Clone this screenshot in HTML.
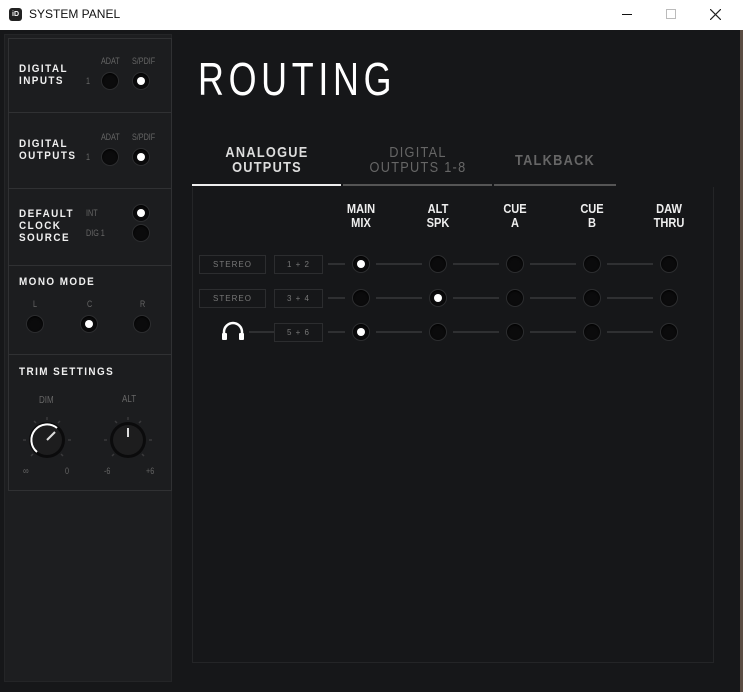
<!DOCTYPE html>
<html><head><meta charset="utf-8"><style>
*{margin:0;padding:0;box-sizing:border-box}
body{width:743px;height:692px;background:#161719;font-family:"Liberation Sans",sans-serif;position:relative;overflow:hidden;color:#fff}
.a{position:absolute}
.tb{left:0;top:0;width:743px;height:30px;background:#fff}
.sb{left:4px;top:34px;width:168px;height:648px;background:#1d1e20;border:1px solid #242527}
.sec{position:absolute;left:8px;width:164px;border:1px solid #303133;background:#1c1d1f}
.lbl{font-size:11px;font-weight:bold;letter-spacing:1.6px;line-height:12px;color:#f0f0f0;transform:scaleX(.9);transform-origin:left}
.sm{font-size:9px;color:#666;transform:scaleX(.8);transform-origin:left}
.r{position:absolute;width:18px;height:18px;margin:-9px 0 0 -9px;border-radius:50%;background:#0b0b0c;border:1px solid #2c2d2f;box-shadow:inset 0 1px 2px #000}
.r.on::after{content:"";position:absolute;left:4px;top:4px;width:8px;height:8px;border-radius:50%;background:#fff}
.ln{position:absolute;height:2px;background:#2f3032}
.hd{position:absolute;font-size:13px;font-weight:bold;text-align:center;line-height:14px;width:60px;margin-left:-30px;color:#eee;transform:scaleX(.85)}
.bx{position:absolute;border:1px solid #2c2d2f;height:19px;font-size:8px;color:#777;text-align:center;line-height:17px;letter-spacing:1px}
.tab{position:absolute;text-align:center;font-size:15px;letter-spacing:1.5px;line-height:15px;transform:scaleX(.85)}
</style></head><body>
<div class="a tb"></div>
<div class="a" style="left:9px;top:8px;width:13px;height:13px;background:#222;border-radius:3px;color:#fff;font-size:7px;font-weight:bold;text-align:center;line-height:13px">iD</div>
<div class="a" style="left:29px;top:7px;font-size:12px;color:#111">SYSTEM PANEL</div>
<div class="a" style="left:622px;top:14px;width:10px;height:1px;background:#111"></div>
<div class="a" style="left:666px;top:9px;width:10px;height:10px;border:1px solid #bbb"></div>
<svg class="a" style="left:710px;top:9px" width="11" height="11"><path d="M0 0L11 11M11 0L0 11" stroke="#222" stroke-width="1.2"/></svg>
<div class="a" style="left:740px;top:30px;width:3px;height:662px;background:#5a4c42"></div>

<div class="a sb"></div>
<div class="sec" style="top:38px;height:75px"></div>
<div class="sec" style="top:112px;height:77px"></div>
<div class="sec" style="top:188px;height:78px"></div>
<div class="sec" style="top:265px;height:90px"></div>
<div class="sec" style="top:354px;height:137px"></div>

<div class="a lbl" style="left:19px;top:63px">DIGITAL<br>INPUTS</div>
<div class="a sm" style="left:101px;top:56px">ADAT</div><div class="a sm" style="left:132px;top:56px">S/PDIF</div>
<div class="a sm" style="left:86px;top:76px;font-size:9px">1</div>
<div class="r" style="left:110px;top:81px"></div><div class="r on" style="left:141px;top:81px"></div>

<div class="a lbl" style="left:19px;top:138px">DIGITAL<br>OUTPUTS</div>
<div class="a sm" style="left:101px;top:132px">ADAT</div><div class="a sm" style="left:132px;top:132px">S/PDIF</div>
<div class="a sm" style="left:86px;top:152px;font-size:9px">1</div>
<div class="r" style="left:110px;top:157px"></div><div class="r on" style="left:141px;top:157px"></div>

<div class="a lbl" style="left:19px;top:208px">DEFAULT<br>CLOCK<br>SOURCE</div>
<div class="a sm" style="left:86px;top:208px">INT</div><div class="a sm" style="left:86px;top:228px">DIG 1</div>
<div class="r on" style="left:141px;top:213px"></div><div class="r" style="left:141px;top:233px"></div>

<div class="a lbl" style="left:19px;top:276px">MONO MODE</div>
<div class="a sm" style="left:33px;top:299px">L</div><div class="a sm" style="left:87px;top:299px">C</div><div class="a sm" style="left:140px;top:299px">R</div>
<div class="r" style="left:35px;top:324px"></div><div class="r on" style="left:89px;top:324px"></div><div class="r" style="left:142px;top:324px"></div>

<div class="a lbl" style="left:19px;top:366px">TRIM SETTINGS</div>
<div class="a sm" style="left:39px;top:395px;font-size:10px">DIM</div><div class="a sm" style="left:122px;top:394px;font-size:10px">ALT</div>
<svg class="a" style="left:10px;top:415px" width="150" height="50">
<g stroke="#3a3a3c" stroke-width="1.5">
<line x1="37" y1="2" x2="37" y2="5"/><line x1="118" y1="2" x2="118" y2="5"/>
<line x1="24" y1="6" x2="26" y2="8"/><line x1="50" y1="6" x2="48" y2="8"/>
<line x1="105" y1="6" x2="107" y2="8"/><line x1="131" y1="6" x2="129" y2="8"/>
<line x1="13" y1="25" x2="16" y2="25"/><line x1="58" y1="25" x2="61" y2="25"/>
<line x1="94" y1="25" x2="97" y2="25"/><line x1="139" y1="25" x2="142" y2="25"/>
<line x1="21" y1="41" x2="23" y2="39"/><line x1="53" y1="41" x2="51" y2="39"/>
<line x1="102" y1="41" x2="104" y2="39"/><line x1="134" y1="41" x2="132" y2="39"/>
</g>
<circle cx="37" cy="25" r="18" fill="#0b0b0c"/><circle cx="37" cy="25" r="15" fill="#1d1d1e"/>
<path d="M27 37 A15 15 0 1 1 47 13" stroke="#fff" stroke-width="2" fill="none"/>
<line x1="37" y1="25" x2="45" y2="17" stroke="#ddd" stroke-width="2"/>
<circle cx="118" cy="25" r="18" fill="#0b0b0c"/><circle cx="118" cy="25" r="15" fill="#1d1d1e"/>
<line x1="118" y1="13" x2="118" y2="22" stroke="#ddd" stroke-width="2"/>
</svg>
<div class="a sm" style="left:23px;top:466px;font-size:10px">∞</div><div class="a sm" style="left:65px;top:466px">0</div>
<div class="a sm" style="left:104px;top:466px">-6</div><div class="a sm" style="left:146px;top:466px">+6</div>

<div class="a" style="left:198px;top:52px;font-size:46px;letter-spacing:6px;transform:scaleX(.78);transform-origin:left;line-height:54px">ROUTING</div>

<div class="tab" style="left:192px;top:145px;width:150px;font-weight:bold;color:#ddd">ANALOGUE<br>OUTPUTS</div>
<div class="tab" style="left:343px;top:145px;width:150px;color:#666">DIGITAL<br>OUTPUTS 1-8</div>
<div class="tab" style="left:494px;top:153px;width:122px;font-weight:bold;color:#666">TALKBACK</div>
<div class="a" style="left:192px;top:184px;width:149px;height:2px;background:#eee"></div>
<div class="a" style="left:343px;top:184px;width:149px;height:2px;background:#555"></div>
<div class="a" style="left:494px;top:184px;width:122px;height:2px;background:#555"></div>
<div class="a" style="left:192px;top:187px;width:522px;height:476px;border:1px solid #242527;border-top:none"></div>

<div class="hd" style="left:361px;top:202px">MAIN<br>MIX</div>
<div class="hd" style="left:438px;top:202px">ALT<br>SPK</div>
<div class="hd" style="left:515px;top:202px">CUE<br>A</div>
<div class="hd" style="left:592px;top:202px">CUE<br>B</div>
<div class="hd" style="left:669px;top:202px">DAW<br>THRU</div>

<div class="bx" style="left:199px;top:255px;width:67px">STEREO</div>
<div class="bx" style="left:274px;top:255px;width:49px">1 + 2</div>
<div class="bx" style="left:199px;top:289px;width:67px">STEREO</div>
<div class="bx" style="left:274px;top:289px;width:49px">3 + 4</div>
<div class="bx" style="left:274px;top:323px;width:49px">5 + 6</div>
<svg class="a" style="left:221px;top:321px" width="24" height="20"><path d="M3 18 V11 A9 9 0 0 1 21 11 V18" stroke="#fff" stroke-width="2.5" fill="none"/><rect x="1" y="12" width="5" height="7" rx="1" fill="#fff"/><rect x="18" y="12" width="5" height="7" rx="1" fill="#fff"/></svg>
<div class="ln" style="left:249px;top:331px;width:25px"></div>

<div class="ln" style="left:328px;top:263px;width:17px"></div><div class="ln" style="left:376px;top:263px;width:46px"></div><div class="ln" style="left:453px;top:263px;width:46px"></div><div class="ln" style="left:530px;top:263px;width:46px"></div><div class="ln" style="left:607px;top:263px;width:46px"></div>
<div class="ln" style="left:328px;top:297px;width:17px"></div><div class="ln" style="left:376px;top:297px;width:46px"></div><div class="ln" style="left:453px;top:297px;width:46px"></div><div class="ln" style="left:530px;top:297px;width:46px"></div><div class="ln" style="left:607px;top:297px;width:46px"></div>
<div class="ln" style="left:328px;top:331px;width:17px"></div><div class="ln" style="left:376px;top:331px;width:46px"></div><div class="ln" style="left:453px;top:331px;width:46px"></div><div class="ln" style="left:530px;top:331px;width:46px"></div><div class="ln" style="left:607px;top:331px;width:46px"></div>

<div class="r on" style="left:361px;top:264px"></div><div class="r" style="left:438px;top:264px"></div><div class="r" style="left:515px;top:264px"></div><div class="r" style="left:592px;top:264px"></div><div class="r" style="left:669px;top:264px"></div>
<div class="r" style="left:361px;top:298px"></div><div class="r on" style="left:438px;top:298px"></div><div class="r" style="left:515px;top:298px"></div><div class="r" style="left:592px;top:298px"></div><div class="r" style="left:669px;top:298px"></div>
<div class="r on" style="left:361px;top:332px"></div><div class="r" style="left:438px;top:332px"></div><div class="r" style="left:515px;top:332px"></div><div class="r" style="left:592px;top:332px"></div><div class="r" style="left:669px;top:332px"></div>
</body></html>
